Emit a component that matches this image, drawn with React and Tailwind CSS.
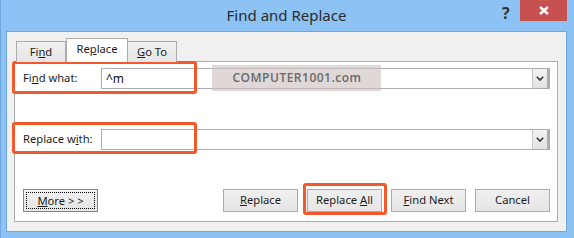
import React from 'react';

const font = "font-['Segoe_UI','Noto_Sans',sans-serif]";

function Btn({ children, focused }) {
    return (
        <div
            className={`h-[23px] w-[75px] flex items-center justify-center border bg-gradient-to-b from-[#f0f0f0] to-[#e5e5e5] text-[11.2px] text-[#1b1b1b] ${focused ? 'border-[#3399ff] w-[74px]' : 'border-[#acacac]'}`}
        >
            {focused ? (
                <div className="m-[2px] flex-1 self-stretch flex items-center justify-center border border-dotted border-black leading-none">
                    <span>{children}</span>
                </div>
            ) : (
                <span>{children}</span>
            )}
        </div>
    );
}

function Combo({ value }) {
    return (
        <div className="flex-1 h-[21px] flex border border-[#abadb3] bg-white">
            <div className="flex-1 pl-[4px] text-[12px] leading-[19px] text-[#111]">{value}</div>
            <div className="w-[17px] border-l border-[#c4c4c4] border-r-2 border-r-[#acacac] border-y border-y-[#acacac] -my-px bg-gradient-to-b from-[#f2f2f2] to-[#e2e2e2] flex items-center justify-center">
                <svg width="8" height="5" viewBox="0 0 8 5">
                    <polyline points="0.8,0.8 4,4 7.2,0.8" fill="none" stroke="#333" strokeWidth="1.6" />
                </svg>
            </div>
        </div>
    );
}

export default function App() {
    return (
        <div className={`w-[574px] h-[238px] bg-[#8cc3f4] border-l border-[#6fa6dc] flex flex-col ${font}`}>
            <div className="relative h-[31px] flex items-center justify-center pb-[1px]">
                <span className="text-[15px] text-[#2b2b2b] ml-[-2px]">Find and Replace</span>
                <span className="absolute left-[501px] top-[1px] text-[16px] font-bold text-[#333]">?</span>
                <div className="absolute left-[519px] top-0 w-[47px] h-[21px] bg-[#c75050] flex items-center justify-center">
                    <svg width="10" height="9" viewBox="0 0 10 9">
                        <path d="M1 1 L9 8 M9 1 L1 8" stroke="#fff" strokeWidth="2.4" />
                    </svg>
                </div>
            </div>

            <div className="flex-1 ml-[5px] mr-[7px] mb-[6px] border border-[#6fa6dc] bg-[#f0f0f0] pt-[6px] pl-[7px] pr-[8px] pb-[9px] flex flex-col">
                <div className="flex items-end pl-[2px] h-[24px] -mb-px relative z-10 text-[11.2px] text-[#1b1b1b]">
                    <div className="w-[50px] h-[21px] border border-b-0 border-[#acacac] bg-gradient-to-b from-[#f0f0f0] to-[#e5e5e5] flex items-center justify-center">
                        <span>Fi<u>n</u>d</span>
                    </div>
                    <div className="w-[62px] h-[24px] border border-b-0 border-[#acacac] bg-white flex items-center justify-center pb-[2px]">
                        <span>Re<u>p</u>lace</span>
                    </div>
                    <div className="w-[49px] h-[21px] border border-b-0 border-l-0 border-[#acacac] bg-gradient-to-b from-[#f0f0f0] to-[#e5e5e5] flex items-center justify-center">
                        <span><u>G</u>o To</span>
                    </div>
                </div>

                <div className="relative flex-1 border border-[#acacac] bg-white pt-[6px] pr-[7px] pb-[9px] flex flex-col text-[11.2px] text-[#1b1b1b]">
                    <div className="flex items-center">
                        <div className="w-[86px] pl-[8px]">Fi<u>n</u>d what:</div>
                        <Combo value="^m" />
                    </div>
                    <div className="flex items-center mt-[40px]">
                        <div className="w-[86px] pl-[8px]">Replace w<u>i</u>th:</div>
                        <Combo value="" />
                    </div>
                    <div className="flex-1" />
                    <div className="flex items-center pl-[8px]">
                        <Btn focused><u>M</u>ore &gt; &gt;</Btn>
                        <div className="flex-1" />
                        <div className="flex gap-[9px]">
                            <Btn><u>R</u>eplace</Btn>
                            <Btn>Replace <u>A</u>ll</Btn>
                            <Btn><u>F</u>ind Next</Btn>
                            <Btn>Cancel</Btn>
                        </div>
                    </div>

                    <div className="absolute left-[-3px] top-[-1px] w-[185px] h-[33px] border-[3px] border-[#f4582c] rounded-[3px]" />
                    <div className="absolute left-[-3px] top-[60px] w-[185px] h-[32px] border-[3px] border-[#f4582c] rounded-[3px]" />
                    <div className="absolute left-[288px] top-[121px] w-[84px] h-[32px] border-[3px] border-[#f4582c] rounded-[3px]" />
                    <div className="absolute left-[197px] top-[3px] w-[169px] h-[26px] bg-[#cbbcbc]/60 flex items-center justify-center pl-[1px]">
                        <span className="font-['Open_Sans',sans-serif] font-semibold text-[12px] tracking-[0.5px] text-[#6a6a6a]">COMPUTER1001.com</span>
                    </div>
                </div>
            </div>
        </div>
    );
}
